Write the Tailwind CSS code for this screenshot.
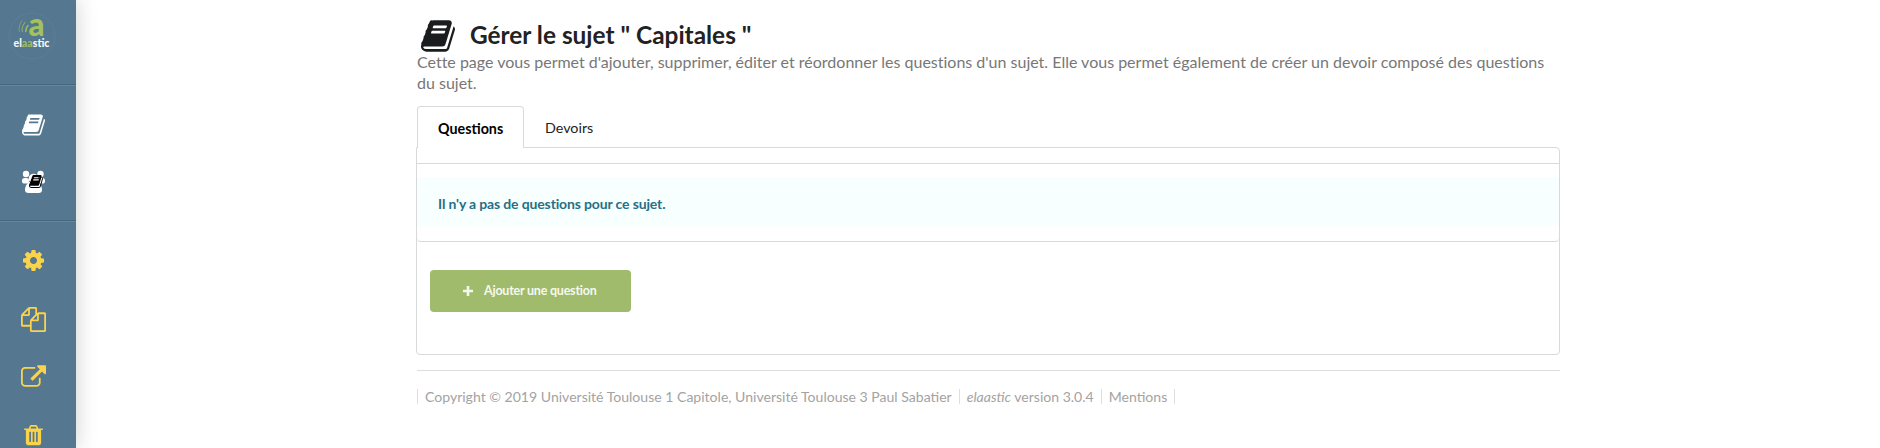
<!DOCTYPE html>
<html lang="fr">
<head>
<meta charset="utf-8">
<title>elaastic</title>
<script src="https://cdn.jsdelivr.net/npm/@tailwindcss/browser@4"></script>
</head>
<body class="flex h-[448px] overflow-hidden bg-white font-['Lato',sans-serif] text-[#222]">
<svg class="hidden">
  <symbol id="book" viewBox="0 128 1664 1536"><path d="M1639 478q40 57 18 129l-275 906q-19 64-76.5 107.5t-122.5 43.5h-923q-77 0-148.5-53.5t-99.5-131.5q-24-67-2-127 0-4 3-27t4-37q1-8-3-21.5t-3-19.5q2-11 8-21t16.5-23.5 16.5-23.5q23-38 45-91.5t30-91.5q3-10 .5-30t-.5-28q3-11 17-28t17-23q21-36 42-92t25-90q1-9-2.5-32t.5-28q4-13 22-30.5t22-22.5q19-26 42.5-84.5t27.5-96.5q1-8-3-25.5t-2-26.5q2-8 9-18t18-23 17-21q8-12 16.5-30.5t15-35 16-36 19.5-32 26.5-23.5 36-11.5 47.5 5.5l-1 3q38-9 51-9h761q74 0 114 56t18 130l-274 906q-36 119-71.5 153.5t-128.5 34.5h-869q-27 0-38 15-11 16-1 43 24 70 144 70h923q29 0 56-15.5t35-41.5l300-987q7-22 5-57 38 15 59 43zm-1064 2q-4 13 2 22.5t20 9.5h608q13 0 25.5-9.5t16.5-22.5l21-64q4-13-2-22.5t-20-9.5h-608q-13 0-25.5 9.5t-16.5 22.5zm-83 256q-4 13 2 22.5t20 9.5h608q13 0 25.5-9.5t16.5-22.5l21-64q4-13-2-22.5t-20-9.5h-608q-13 0-25.5 9.5t-16.5 22.5z"/></symbol>
</svg>
<aside class="flex h-full w-[76px] shrink-0 flex-col bg-[#55778f] shadow-[0_0_20px_rgba(34,36,38,0.22)]">
  <div class="h-[84px] pt-[12px] pl-[8px]">
    <svg class="overflow-visible" width="48" height="48" viewBox="0 0 48 48">
      <circle cx="24" cy="24" r="23" fill="none" stroke="#5e7e95" stroke-width="1"/>
      <g fill="none" stroke="#9fbe5f" stroke-linecap="round">
        <path d="M20 13.500Q17.500 16 17.800 19.500" stroke-width="1.400"/>
        <path d="M17 10.500Q13.500 14.500 14.200 19.500" stroke-width="1.100" opacity=".8"/>
        <path d="M14 8.500Q10.500 13 11.200 19.500" stroke-width=".9" opacity=".6"/>
      </g>
      <text x="20.500" y="24" font-family="Lato" font-weight="900" font-size="32" textLength="16" lengthAdjust="spacingAndGlyphs" fill="#a3c15c">a</text>
      <text x="5.500" y="34.500" font-family="Lato" font-weight="900" font-size="10.500" textLength="36" lengthAdjust="spacingAndGlyphs" fill="#f4f8fa">el<tspan fill="#9fbe5f">aa</tspan>stic</text>
    </svg>
  </div>
  <div class="flex h-[136px] flex-col items-center border-t border-[#48677c] pt-[29px] pr-[9px] shadow-[inset_0_1px_0_#66869c]">
    <svg class="h-[22px] w-[23px]" fill="#fff"><use href="#book"/></svg>
    <svg class="mt-[34px]" width="25" height="24" viewBox="0 0 25 24" fill="#fff">
      <circle cx="5" cy="4" r="3.200"/><circle cx="19.500" cy="4" r="3.200"/>
      <circle cx="12.500" cy="8.500" r="4.800"/>
      <rect x="1" y="8" width="7" height="5.500" rx="2.600"/><rect x="17" y="8" width="7" height="5.500" rx="2.600"/>
      <path d="M8 12h9q4 3 4 8 0 3-3.500 3H7.500Q4 23 4 20 4 15 8 12z"/>
      <svg x="8" y="5" width="14" height="13" fill="#000"><use href="#book"/></svg>
    </svg>
  </div>
  <div class="flex flex-col items-center border-t border-[#48677c] pt-[29px] pr-[9px] shadow-[inset_0_1px_0_#66869c]">
    <svg width="21" height="21" viewBox="128 128 1536 1536" fill="#fbd34b"><path d="M1152 896q0-106-75-181t-181-75-181 75-75 181 75 181 181 75 181-75 75-181zm512-109v222q0 12-8 23t-20 13l-185 28q-19 54-39 91 35 50 107 138 10 12 10 25t-9 23q-27 37-99 108t-94 71q-12 0-26-9l-138-108q-44 23-91 38-16 136-29 186-7 28-36 28h-222q-14 0-24.500-8.500t-11.500-21.500l-28-184q-49-16-90-37l-141 107q-10 9-25 9-14 0-25-11-126-114-165-168-7-10-7-23 0-12 8-23 15-21 51-66.500t54-70.500q-27-50-41-99l-183-27q-13-2-21-12.500t-8-23.500v-222q0-12 8-23t19-13l186-28q14-46 39-92-40-57-107-138-10-12-10-24 0-10 9-23 26-36 98.500-107.500t94.500-71.500q13 0 26 10l138 107q44-23 91-38 16-136 29-186 7-28 36-28h222q14 0 24.500 8.500t11.500 21.500l28 184q49 16 90 37l142-107q9-9 24-9 13 0 25 10 129 119 165 170 7 8 7 22 0 12-8 23-15 21-51 66.500t-54 70.500q26 50 41 98l183 28q13 2 21 12.500t8 23.500z"/></svg>
    <svg class="mt-[36px]" width="25" height="25" viewBox="0 0 1792 1792" fill="#fbd34b"><path d="M1696 384q40 0 68 28t28 68v1216q0 40-28 68t-68 28h-960q-40 0-68-28t-28-68v-288h-544q-40 0-68-28t-28-68v-672q0-40 20-88t48-76l408-408q28-28 76-48t88-20h416q40 0 68 28t28 68v328q68-40 128-40h416zm-544 213l-299 299h299v-299zm-640-384l-299 299h299v-299zm196 647l316-316v-416h-384v416q0 40-28 68t-68 28h-416v640h512v-256q0-40 20-88t48-76zm956 804v-1152h-384v416q0 40-28 68t-68 28h-416v640h896z"/></svg>
    <svg class="mt-[33px]" width="25" height="22" viewBox="0 0 1792 1536" fill="#fbd34b"><path d="M1408 928v320q0 119-84.500 203.500t-203.500 84.500h-832q-119 0-203.500-84.500t-84.500-203.500v-832q0-119 84.500-203.500t203.500-84.500h704q14 0 23 9t9 23v64q0 14-9 23t-23 9h-704q-66 0-113 47t-47 113v832q0 66 47 113t113 47h832q66 0 113-47t47-113v-320q0-14 9-23t23-9h64q14 0 23 9t9 23zm384-864v512q0 26-19 45t-45 19-45-19l-176-176-652 652q-10 10-23 10t-23-10l-114-114q-10-10-10-23t10-23l652-652-176-176q-19-19-19-45t19-45 45-19h512q26 0 45 19t19 45z"/></svg>
    <svg class="mt-[38px]" width="19" height="22" viewBox="192 128 1408 1664" fill="#fbd34b"><path d="M704 1376v-704q0-14-9-23t-23-9h-64q-14 0-23 9t-9 23v704q0 14 9 23t23 9h64q14 0 23-9t9-23zm256 0v-704q0-14-9-23t-23-9h-64q-14 0-23 9t-9 23v704q0 14 9 23t23 9h64q14 0 23-9t9-23zm256 0v-704q0-14-9-23t-23-9h-64q-14 0-23 9t-9 23v704q0 14 9 23t23 9h64q14 0 23-9t9-23zm-544-992h448l-48-117q-7-9-17-11h-317q-10 2-17 11zm928 32v64q0 14-9 23t-23 9h-96v948q0 83-47 143.500t-113 60.500h-832q-66 0-113-58.500t-47-141.500v-952h-96q-14 0-23-9t-9-23v-64q0-14 9-23t23-9h309l70-167q15-37 54-63t79-26h320q40 0 79 26t54 63l70 167h309q14 0 23 9t9 23z"/></svg>
  </div>
</aside>
<main class="ml-[340px] w-[1144px] pt-[19px]">
  <header class="pl-px">
    <h1 class="flex h-[33px] items-center pl-[4px] text-[24.400px] font-bold whitespace-nowrap"><svg class="mr-[15px] h-[32px] w-[34px]" fill="#1b1c1d"><use href="#book"/></svg><span>Gérer le sujet " Capitales "</span></h1>
    <p class="text-[16px] leading-[20.500px] whitespace-nowrap text-[#777] [font-variant-ligatures:none]">Cette page vous permet d'ajouter, supprimer, éditer et réordonner les questions d'un sujet. Elle vous permet également de créer un devoir composé des questions<br>du sujet.</p>
  </header>
  <nav class="relative z-10 mt-[13px] -mb-px ml-px flex h-[42px] text-[14.300px]">
    <a class="w-[107px] rounded-t-[4px] border border-b-0 border-[#d8d9d9] bg-white pt-[11px] pl-[20px] font-bold text-black">Questions</a>
    <a class="pt-[11px] pl-[21px]">Devoirs</a>
  </nav>
  <section class="h-[208px] rounded-[4px] rounded-tl-none border border-[#d8d9d9] pt-[15px]">
    <div class="h-[79px] rounded-b-[4px] border-y border-[#d8d9d9] pt-[13px]">
      <p class="flex h-[49px] items-center bg-[#f8ffff] pt-[3px] pl-[21px] text-[14px] font-bold tracking-[-0.140px] text-[#276f86]">Il n'y a pas de questions pour ce sujet.</p>
    </div>
    <button class="mt-[28px] ml-[13px] flex h-[42px] w-[201px] items-center rounded-[4px] bg-[#9fbb6b] pl-[33px] text-[12.500px] font-bold tracking-[-0.220px] text-white/90">
      <svg class="mr-[11px]" width="10" height="10" viewBox="0 0 10 10"><path d="M5 0v10M0 5h10" stroke="#f3f7ec" stroke-width="2.600"/></svg>Ajouter une question
    </button>
  </section>
  <footer class="mt-[15px] ml-px border-t border-[#dedede] pt-[18px] text-[14.050px] text-[#a3a3a3]">
    <div class="flex h-[15px] items-center border-l border-[#dedede] leading-[15px]">
      <span class="border-r border-[#dedede] px-[7px]">Copyright © 2019 Université Toulouse 1 Capitole, Université Toulouse 3 Paul Sabatier</span>
      <span class="border-r border-[#dedede] px-[7px]"><em>elaastic</em> version 3.0.4</span>
      <span class="border-r border-[#dedede] px-[7px]">Mentions</span>
    </div>
  </footer>
</main>
</body>
</html>
